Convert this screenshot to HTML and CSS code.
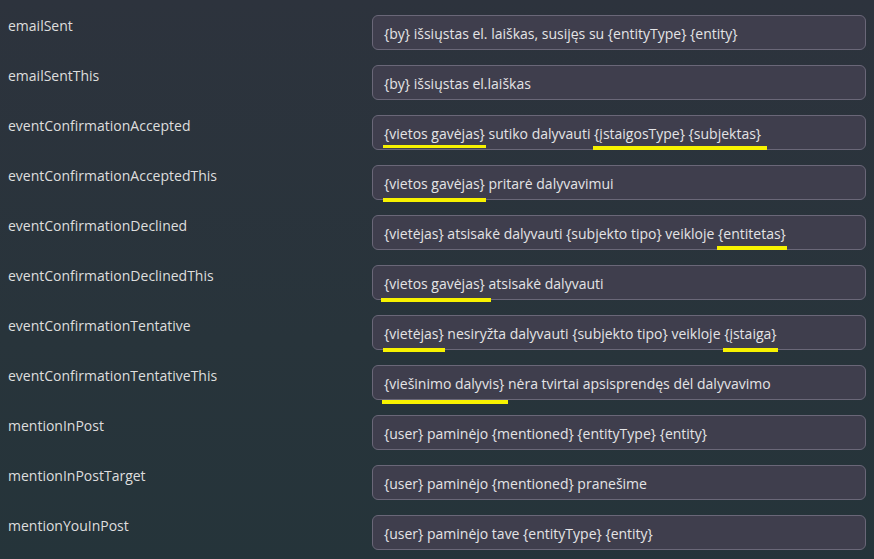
FILE: index.html
```html
<!DOCTYPE html>
<html lang="lt">

<head>
    <meta charset="UTF-8">
    <meta name="viewport" content="width=device-width, initial-scale=1.0">
    <title>Translations</title>
    <link rel="stylesheet" href="styles.css">
</head>

<body>
    <div class="translations">
        <div class="row">
            <div class="key">emailSent</div>
            <div class="value">{by} išsiųstas el. laiškas, susijęs su {entityType} {entity}</div>
        </div>
        <div class="row">
            <div class="key">emailSentThis</div>
            <div class="value">{by} išsiųstas el.laiškas</div>
        </div>
        <div class="row">
            <div class="key">eventConfirmationAccepted</div>
            <div class="value"><span class="hl hl-high">{vietos gavėjas}</span> sutiko dalyvauti <span class="hl hl-mid">{įstaigosType}</span> <span class="hl hl-mid hl-wide">{subjektas}</span></div>
        </div>
        <div class="row">
            <div class="key">eventConfirmationAcceptedThis</div>
            <div class="value"><span class="hl">{vietos gavėjas}</span> pritarė dalyvavimui</div>
        </div>
        <div class="row">
            <div class="key">eventConfirmationDeclined</div>
            <div class="value">{vietėjas} atsisakė dalyvauti {subjekto tipo} veikloje <span class="hl hl-mid">{entitetas}</span></div>
        </div>
        <div class="row">
            <div class="key">eventConfirmationDeclinedThis</div>
            <div class="value"><span class="hl hl-wide">{vietos gavėjas}</span> atsisakė dalyvauti</div>
        </div>
        <div class="row">
            <div class="key">eventConfirmationTentative</div>
            <div class="value"><span class="hl">{vietėjas}</span> nesiryžta dalyvauti {subjekto tipo} veikloje <span class="hl">{įstaiga}</span></div>
        </div>
        <div class="row">
            <div class="key">eventConfirmationTentativeThis</div>
            <div class="value"><span class="hl hl-low">{viešinimo dalyvis}</span> nėra tvirtai apsisprendęs dėl dalyvavimo</div>
        </div>
        <div class="row">
            <div class="key">mentionInPost</div>
            <div class="value">{user} paminėjo {mentioned} {entityType} {entity}</div>
        </div>
        <div class="row">
            <div class="key">mentionInPostTarget</div>
            <div class="value">{user} paminėjo {mentioned} pranešime</div>
        </div>
        <div class="row">
            <div class="key">mentionYouInPost</div>
            <div class="value">{user} paminėjo tave {entityType} {entity}</div>
        </div>
    </div>
</body>

</html>
```

FILE: styles.css
```css
html {
    background: linear-gradient(180deg, #2d333d 0%, #28343b 60%, #25343a 100%);
    min-height: 100%;
}

body {
    margin: 0;
    padding: 15px 8px;
    font-family: "Open Sans", "Noto Sans", sans-serif;
    font-size: 14px;
    color: #dedede;
}

.translations {
    display: flex;
    flex-direction: column;
    gap: 15px;
}

.row {
    display: grid;
    grid-template-columns: 364px 1fr;
}

.key {
    padding-top: 1px;
    line-height: 19px;
}

.value {
    height: 35px;
    box-sizing: border-box;
    padding: 8px 11px 6px;
    white-space: nowrap;
    background: #3f3e4d;
    border: 1px solid #6a6778;
    border-radius: 6px;
    color: #e4e4e6;
    line-height: 19px;
}

/* yellow marker strokes over some placeholders */
.hl {
    position: relative;
}

.hl::after {
    content: "";
    position: absolute;
    left: -1px;
    right: -1px;
    bottom: -9px;
    height: 4px;
    background: #f7f200;
}

.hl-high::after {
    bottom: -5px;
    height: 3px;
}

.hl-mid::after {
    bottom: -7px;
}

.hl-wide::after {
    left: -3px;
    right: -6px;
}

.hl-low::after {
    left: -2px;
    right: -4px;
    bottom: -11px;
}
```
